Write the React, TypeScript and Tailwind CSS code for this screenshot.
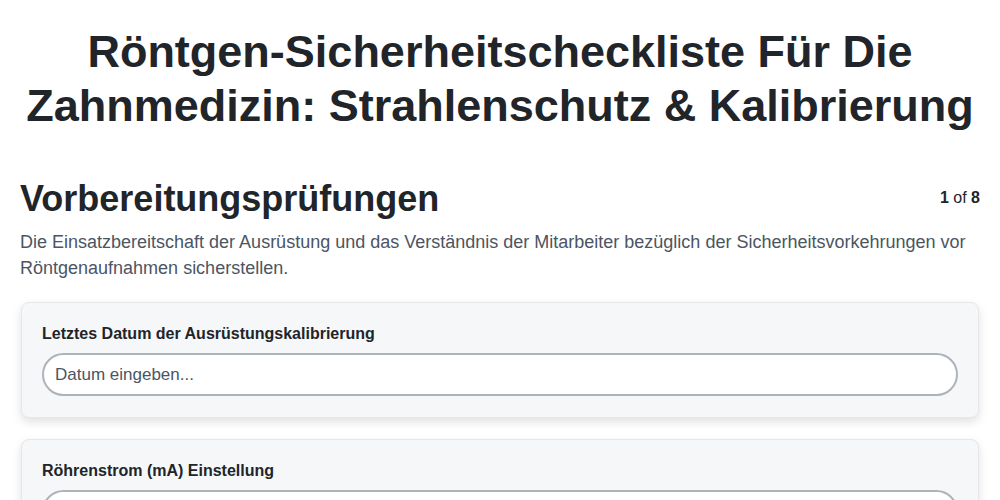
import React from "react";

export default function App() {
  const fields = [
    { label: "Letztes Datum der Ausrüstungskalibrierung", placeholder: "Datum eingeben..." },
    { label: "Röhrenstrom (mA) Einstellung", placeholder: "" },
    { label: "Röhrenspannung (kV) Einstellung", placeholder: "" },
  ];
  return (
    <div className="min-h-screen bg-white text-[#212529]" style={{ fontFamily: '"Liberation Sans", Arial, sans-serif' }}>
      <div className="px-5">
        <h1 className="pt-[25px] text-center text-[45px] font-bold leading-[54px] text-[#212529]">
          Röntgen-Sicherheitscheckliste Für Die Zahnmedizin: Strahlenschutz &amp; Kalibrierung
        </h1>
        <div className="mt-[44px] flex items-start justify-between">
          <h2 className="text-[36px] font-bold leading-[44px]">Vorbereitungsprüfungen</h2>
          <div className="pt-[9px] text-[16px] text-[#212529]">
            <span className="font-bold">1</span> of <span className="font-bold">8</span>
          </div>
        </div>
        <p className="mt-[8px] text-[18px] leading-[26px] text-[#4b5563]">
          Die Einsatzbereitschaft der Ausrüstung und das Verständnis der Mitarbeiter bezüglich der Sicherheitsvorkehrungen vor Röntgenaufnahmen sicherstellen.
        </p>
        <div className="mt-[21px] flex flex-col gap-[21px]">
          {fields.map((f) => (
            <div
              key={f.label}
              className="mx-px rounded-lg border border-[#e5e7eb] bg-[#f6f7f9] px-[20px] pb-[21px] pt-[21px] shadow-[0_4px_10px_rgba(0,0,0,0.12)]"
            >
              <label className="block text-[16px] font-bold leading-[20px] text-[#212529]">{f.label}</label>
              <input
                className="mt-[9px] block h-[43px] w-full rounded-full border-2 border-[#adb3bb] bg-white px-[11px] text-[17px] text-[#212529] placeholder:text-[#4b5563] outline-none"
                placeholder={f.placeholder}
                style={{ fontFamily: '"Liberation Sans", Arial, sans-serif' }}
              />
            </div>
          ))}
        </div>
      </div>
    </div>
  );
}
